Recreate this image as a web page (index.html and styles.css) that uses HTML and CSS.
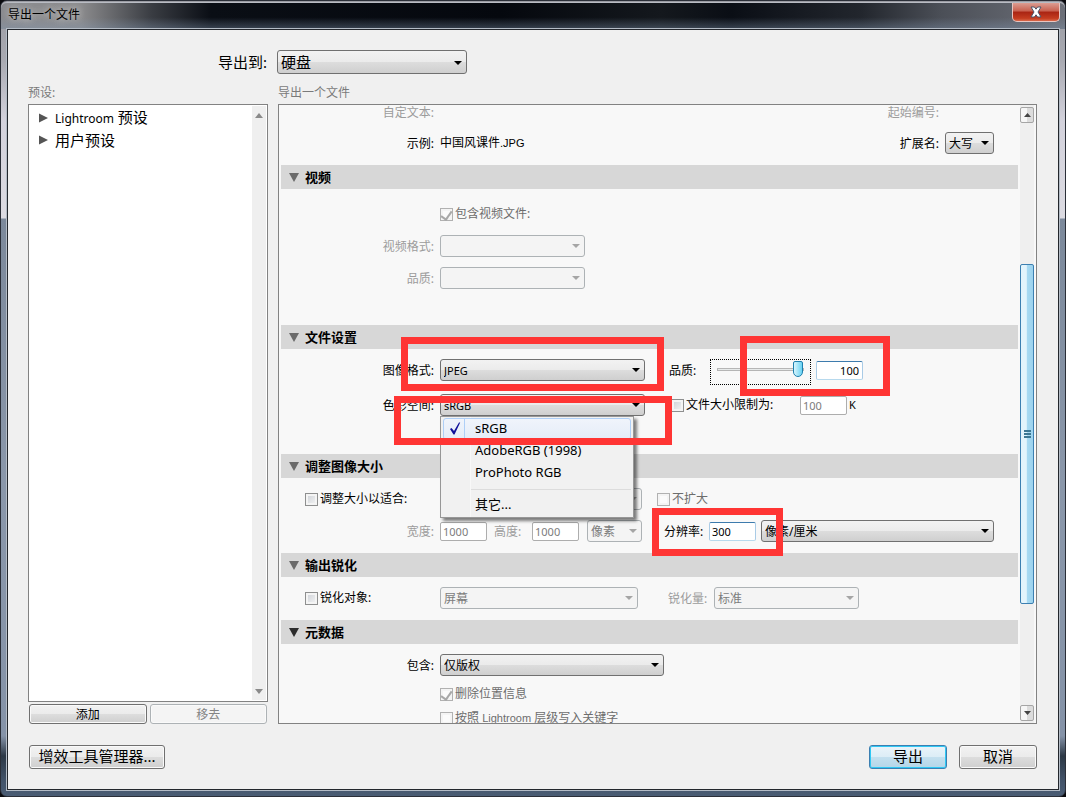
FILE: index.html
```html
<!DOCTYPE html>
<html lang="zh-CN">
<head>
  <meta charset="UTF-8" />
  <meta name="viewport" content="width=device-width, initial-scale=1.0"/>
  <title>导出一个文件</title>
  <link rel="stylesheet" href="styles.css">
</head>
<body>

<div class="window">
  <header class="titlebar">
    <h1>导出一个文件</h1>
    <button type="button" class="close" aria-label="关闭">
      <svg width="14" height="12" viewBox="0 0 14 12">
        <path d="M2 1h3.4L7 3.2 8.6 1H12L9 6l3 5H8.6L7 8.8 5.4 11H2l3-5z" fill="#fff" stroke="#4d5468" stroke-width="1"/>
      </svg>
    </button>
  </header>

  <form class="client">
    <div class="target">
      <label for="target">导出到:</label>
      <span class="select large w-target"><select id="target"><option>硬盘</option></select></span>
    </div>

    <div class="columns">
      <section class="presets">
        <h2 class="caption">预设:</h2>
        <div class="list">
          <ul>
            <li><svg width="9" height="10" viewBox="0 0 9 10"><path d="M0 0.5L9 5 0 9.5z" fill="#555"/></svg><span><span class="latin">Lightroom</span> 预设</span></li>
            <li><svg width="9" height="10" viewBox="0 0 9 10"><path d="M0 0.5L9 5 0 9.5z" fill="#555"/></svg>用户预设</li>
          </ul>
          <div class="scrollbar thin">
            <svg width="8" height="5" viewBox="0 0 8 5"><path d="M4 0l4 5H0z" fill="#8a8a8a"/></svg>
            <svg width="8" height="5" viewBox="0 0 8 5"><path d="M0 0h8L4 5z" fill="#8a8a8a"/></svg>
          </div>
        </div>
        <div class="preset-buttons">
          <button type="button">添加</button>
          <button type="button" disabled>移去</button>
        </div>
      </section>

      <section class="settings">
        <h2 class="caption">导出一个文件</h2>
        <div class="panel">
          <div class="content">
            <div class="group naming">
              <div class="row cut muted">
                <span class="name">自定文本:</span>
                <span class="right start-no">起始编号:</span>
              </div>
              <div class="row">
                <span class="name">示例:</span>
                <span>中国风课件<span class="small">.JPG</span></span>
                <label class="right" for="ext">扩展名:</label>
                <span class="select w-ext"><select id="ext"><option>大写</option></select></span>
              </div>
            </div>

            <h3><i class="fold"></i>视频</h3>
            <div class="group video">
              <div class="row">
                <span class="name"></span>
                <label class="check"><input type="checkbox" checked disabled>包含视频文件:</label>
              </div>
              <div class="row">
                <label class="name muted" for="vformat">视频格式:</label>
                <span class="select off w-video"><select id="vformat" disabled></select></span>
              </div>
              <div class="row">
                <label class="name muted" for="vquality">品质:</label>
                <span class="select off w-video"><select id="vquality" disabled></select></span>
              </div>
            </div>

            <h3><i class="fold"></i>文件设置</h3>
            <div class="group file">
              <div class="row">
                <label class="name" for="format">图像格式:</label>
                <span class="select latin-value w-format"><select id="format"><option>JPEG</option></select></span>
                <label class="quality-name" for="quality">品质:</label>
                <span class="slider"><input type="range" id="quality" min="0" max="100" value="100"></span>
                <input type="text" class="active number" value="100" aria-label="品质">
              </div>
              <div class="row">
                <label class="name" for="space">色彩空间:</label>
                <span class="select latin-value w-format">
                  <select id="space"><option>sRGB</option></select>
                  <span class="menu">
                    <button type="button" class="selected"><svg width="12" height="13" viewBox="0 0 12 13"><path d="M1 7l1.5-1L5 9 10 0.500h1.200L5.500 12.500H4.500z" fill="#10109a"/></svg>sRGB</button>
                    <button type="button">AdobeRGB (1998)</button>
                    <button type="button">ProPhoto RGB</button>
                    <span class="line"></span>
                    <button type="button">其它...</button>
                  </span>
                </span>
                <label class="check limit"><input type="checkbox">文件大小限制为:</label>
                <input type="text" value="100" disabled aria-label="文件大小">
                <span class="unit">K</span>
              </div>
            </div>

            <h3><i class="fold"></i>调整图像大小</h3>
            <div class="group resize">
              <div class="row">
                <label class="check wide"><input type="checkbox">调整大小以适合:</label>
                <span class="select off w-fit"><select disabled aria-label="适合"></select></span>
                <label class="check enlarge"><input type="checkbox" disabled>不扩大</label>
              </div>
              <div class="row">
                <label class="name muted" for="width">宽度:</label>
                <input type="text" id="width" value="1000" disabled>
                <label class="height-name muted" for="height">高度:</label>
                <input type="text" id="height" value="1000" disabled>
                <span class="select off w-unit"><select disabled aria-label="单位"><option>像素</option></select></span>
                <label class="ppi-name" for="ppi">分辨率:</label>
                <input type="text" id="ppi" class="active" value="300">
                <span class="select grow"><select aria-label="分辨率单位"><option>像素/厘米</option></select></span>
              </div>
            </div>

            <h3><i class="fold"></i>输出锐化</h3>
            <div class="group sharpen">
              <div class="row">
                <label class="check wide"><input type="checkbox">锐化对象:</label>
                <span class="select off w-sharpen"><select disabled aria-label="锐化对象"><option>屏幕</option></select></span>
                <label class="amount-name muted" for="amount">锐化量:</label>
                <span class="select off w-video"><select id="amount" disabled><option>标准</option></select></span>
              </div>
            </div>

            <h3><i class="fold dark"></i>元数据</h3>
            <div class="group meta">
              <div class="row">
                <label class="name" for="include">包含:</label>
                <span class="select w-include"><select id="include"><option>仅版权</option></select></span>
              </div>
              <div class="row">
                <span class="name"></span>
                <label class="check"><input type="checkbox" checked disabled>删除位置信息</label>
              </div>
              <div class="row last">
                <span class="name"></span>
                <label class="check"><input type="checkbox" disabled><span>按照 <span class="small">Lightroom</span> 层级写入关键字</span></label>
              </div>
            </div>

            <!-- highlighted options -->
            <div class="mark mark-format"></div>
            <div class="mark mark-space"></div>
            <div class="mark mark-quality"></div>
            <div class="mark mark-ppi"></div>
          </div>

          <div class="scrollbar">
            <button type="button" aria-label="向上"><svg width="7" height="4" viewBox="0 0 7 4"><path d="M3.500 0L7 4H0z" fill="#444"/></svg></button>
            <div class="track"><div class="thumb"><i></i><i></i><i></i></div></div>
            <button type="button" aria-label="向下"><svg width="7" height="4" viewBox="0 0 7 4"><path d="M0 0h7L3.500 4z" fill="#444"/></svg></button>
          </div>
        </div>
      </section>
    </div>

    <footer>
      <button type="button" class="plugins">增效工具管理器...</button>
      <button type="submit" class="primary">导出</button>
      <button type="button">取消</button>
    </footer>
  </form>
</div>

</body>
</html>
```
FILE: styles.css
```css
* {
  box-sizing: border-box;
}
body {
  margin: 0;
  background: #0a0a0e;
  font-family: "Noto Sans", "Noto Sans CJK SC", sans-serif;
  font-size: 12px;
  line-height: 18px;
  color: #000;
}
h1, h2, h3, ul {
  margin: 0;
  padding: 0;
  font-weight: normal;
  font-size: 12px;
}
button, input, select {
  font-family: inherit;
  font-size: 12px;
  color: #000;
  margin: 0;
}

/* window frame */
.window {
  display: flex;
  flex-direction: column;
  height: 100vh;
  min-height: 797px;
  padding: 2px 6px 6px;
  border: 1px solid #2b2f38;
  border-radius: 7px;
  background: linear-gradient(#9a9ba2 0, #a9aab2 60px, #d3d2dc 120px, #dcdbe2 217px, #7c899b 218px, #8a97aa 480px, #8593a8 735px, #2c3846 755px, #43546a 780px, #4a5c74 100%);
}
.titlebar {
  display: flex;
  justify-content: space-between;
  align-items: flex-start;
  height: 26px;
  margin: 0 -6px;
  padding: 0 5px 0 7px;
  border-top: 1px solid #b9bcc4;
  border-radius: 6px 6px 0 0;
  margin-top: -1px;
  flex: 0 0 27px;
  background: linear-gradient(rgba(255,255,255,0) 55%, rgba(130,150,175,0.4)), linear-gradient(90deg, #8a8b8f 0, #8b8b8d 80px, #3a3d43 150px, #0a0e15 210px, #05080e 500px, #14181d 660px, #0a0e15 730px, #22262d 860px, #4b4f57 940px, #6d7079 100%);
}
.titlebar h1 {
  line-height: 24px;
  text-shadow: 0 0 6px #ccc, 0 0 8px #bbb;
}
.close {
  display: flex;
  justify-content: center;
  align-items: center;
  width: 48px;
  height: 19px;
  padding: 0;
  border: 1px solid #e9c5c0;
  border-top: 0;
  border-radius: 0 0 5px 5px;
  background: linear-gradient(#dc9d92, #c8604f 45%, #a92413 50%, #c43c20 85%, #d9694a);
}
.client {
  display: flex;
  flex-direction: column;
  flex: 1;
  min-height: 0;
  padding: 20px 21px 20px 20px;
  border: 1px solid #23272d;
  background: #f0f0f0;
  box-shadow: 0 0 0 1px #b4bcc6;
}

/* top row */
.target {
  display: flex;
  align-items: center;
  gap: 10px;
  padding-left: 190px;
  font-size: 15px;
}
.columns {
  display: flex;
  flex: 1;
  gap: 10px;
  min-height: 0;
  margin: 10px 0 21px;
}
.caption {
  line-height: 18px;
  margin-bottom: 2px;
  color: #7a7a7a;
}

/* preset list */
.presets {
  display: flex;
  flex-direction: column;
  width: 240px;
}
.list {
  display: flex;
  flex: 1;
  justify-content: space-between;
  padding: 1px;
  border: 1px solid #828282;
  background: #fff;
}
.list ul {
  padding: 1px 9px;
  list-style: none;
}
.list li {
  display: flex;
  align-items: center;
  gap: 7px;
  height: 22px;
  font-size: 15px;
}
.latin {
  font-size: 12px;
}
.small {
  font-family: "Liberation Sans", sans-serif;
  font-size: 11px;
}
.preset-buttons {
  display: grid;
  grid-template-columns: 1fr 1fr;
  gap: 3px;
  padding: 2px 1px 0;
}

/* buttons */
.preset-buttons button, footer button {
  height: 20px;
  padding: 0;
  border: 1px solid #707070;
  border-radius: 3px;
  background: linear-gradient(#f2f2f2, #ebebeb 50%, #dddddd 50%, #cfcfcf);
  box-shadow: inset 0 0 0 1px #fafafa;
}
.preset-buttons button:disabled {
  border-color: #adb2b5;
  background: #f4f4f4;
  color: #838383;
}
footer {
  display: flex;
  gap: 12px;
  padding-left: 1px;
}
footer button {
  width: 78px;
  height: 24px;
  padding-bottom: 2px;
  font-size: 15px;
  line-height: 20px;
}
footer .plugins {
  width: 136px;
  margin-right: auto;
}
footer .primary {
  border-color: #3c7fb1;
  background: linear-gradient(#eaf4fa, #dcedf6 50%, #c4e0ef 50%, #b4d6e8);
  box-shadow: inset 0 0 0 1px #2fc8f4;
}

/* settings panel */
.settings {
  display: flex;
  flex-direction: column;
  flex: 1;
  min-width: 0;
}
.panel {
  display: flex;
  flex: 1;
  gap: 2px;
  min-height: 0;
  padding: 0 2px;
  border: 1px solid #828282;
  background: #f8f8f8;
  overflow: hidden;
}
.content {
  position: relative;
  flex: 1;
  min-width: 0;
}
h3 {
  display: flex;
  align-items: center;
  gap: 6px;
  height: 24px;
  padding-left: 8px;
  background: #d7d7d7;
  font-size: 13px;
  font-weight: bold;
}
.fold {
  border: 5px solid transparent;
  border-top: 9px solid #6a6a6a;
  border-bottom: 0;
}
.fold.dark {
  border-top-color: #2c2c2c;
}
.group {
  display: flex;
  flex-direction: column;
  padding: 10px 24px 11px 0;
}
.row {
  display: flex;
  align-items: center;
  height: 22px;
}
.row > label:not(.check), .name {
  padding-top: 2px;
}
.name {
  width: 153px;
  margin-right: 6px;
  text-align: right;
}
.muted {
  color: #9c9c9c;
}
.right {
  margin-left: auto;
  margin-right: 6px;
}
.naming {
  gap: 13px;
  padding-top: 0;
}
.row.cut {
  height: 14px;
}
.start-no {
  padding-top: 2px;
  margin-right: 55px;
}
.video {
  gap: 10px;
  padding-top: 14px;
  padding-bottom: 36px;
}
.file {
  gap: 13px;
  padding-bottom: 38px;
}
.resize {
  gap: 10px;
}
.meta {
  gap: 7px;
  padding-bottom: 0;
}
.meta .last {
  margin-top: -5px;
}

/* drop-downs */
.select {
  position: relative;
  display: block;
  height: 22px;
}
.select select {
  display: block;
  width: 100%;
  height: 100%;
  padding: 0 16px 0 3px;
  border: 1px solid #707070;
  border-radius: 3px;
  background: linear-gradient(#f2f2f2, #ebebeb 50%, #dddddd 50%, #cfcfcf);
  appearance: none;
  opacity: 1;
}
.select::after {
  content: "";
  position: absolute;
  right: 5px;
  top: 9px;
  border: 4px solid transparent;
  border-top-color: #000;
  border-bottom: 0;
}
.select.off select {
  border-color: #adb2b5;
  background: #f4f4f4;
  color: #7c7c7c;
}
.select.off::after {
  border-top-color: #a5a5a5;
}
.select.large {
  height: 24px;
}
.select.large select {
  font-size: 15px;
}
.select.large::after {
  top: 11px;
}
.select.latin-value select {
  font-size: 11px;
}
.w-target { width: 190px; }
.w-ext { width: 49px; }
.w-video { width: 145px; }
.w-format { width: 205px; }
.w-fit { width: 202px; }
.w-unit { width: 55px; margin-left: 8px; }
.w-sharpen { width: 198px; }
.w-include { width: 224px; }
.grow { flex: 1; margin-left: 5px; }

/* text boxes */
input[type="text"] {
  width: 47px;
  height: 19px;
  padding: 0 2px;
  border: 1px solid #adadad;
  border-radius: 2px;
  background: #fff;
  font-size: 11px;
}
input[type="text"]:disabled {
  color: #7c7c7c;
}
input[type="text"].active {
  border-color: #3d7bad #a9cbe6 #b7d9ed #a9cbe6;
}
input[type="text"].number {
  margin-left: 5px;
  padding-right: 3px;
  text-align: right;
}

/* tick boxes */
.check {
  display: flex;
  align-items: center;
  gap: 2px;
}
.check input {
  display: grid;
  place-items: center;
  width: 13px;
  height: 13px;
  border: 1px solid #8e8f8f;
  background: linear-gradient(135deg, #cbcfd5, #f6f6f6);
  box-shadow: inset 0 0 0 2px #f4f4f4;
  appearance: none;
}
.check input:disabled {
  border-color: #b1b1b1;
  background: #fbfbfb;
}
.check:has(:disabled) {
  color: #6d6d6d;
}
.check input:checked::before {
  content: "";
  width: 5px;
  height: 9px;
  margin-bottom: 2px;
  border: solid #a8a8a8;
  border-width: 0 2px 2px 0;
  transform: rotate(35deg);
}
.check.wide {
  width: 135px;
  margin-left: 24px;
}
.check.limit {
  width: 129px;
  margin-left: 26px;
}
.enlarge {
  margin-left: 15px;
}
.unit {
  margin-left: 2px;
  font-size: 11px;
}
.quality-name {
  width: 41px;
  margin-left: 24px;
}
.height-name {
  width: 38px;
  margin-left: 7px;
}
.ppi-name {
  width: 45px;
  margin-left: 22px;
}
.amount-name {
  width: 46px;
  margin-left: 30px;
}

/* quality slider */
.slider {
  width: 101px;
  height: 26px;
  padding: 0 6px;
  margin-top: 3px;
  border: 1px dotted #000;
}
.slider input {
  display: block;
  width: 100%;
  height: 20px;
  background: none;
  appearance: none;
}
.slider input::-webkit-slider-runnable-track {
  height: 3px;
  border: 1px solid #b5b5b5;
  background: #e7eaea;
}
.slider input::-webkit-slider-thumb {
  width: 10px;
  height: 16px;
  margin-top: -8px;
  border: 1px solid #1c7fae;
  border-radius: 2px 2px 5px 5px;
  background: linear-gradient(90deg, #d8f5fd, #6bd3f3);
  appearance: none;
}

/* open colour space menu */
.menu {
  position: absolute;
  z-index: 1;
  top: 100%;
  left: 0;
  width: 194px;
  padding: 1px 2px 2px;
  border: 1px solid #979797;
  background: linear-gradient(90deg, #f1f1f1 28px, #e2e3e3 28px, #fff 29px, #f1f1f1 30px);
  box-shadow: 3px 3px 3px rgba(0,0,0,0.5);
}
.menu button {
  display: flex;
  align-items: center;
  gap: 14px;
  width: 100%;
  height: 22px;
  padding: 0 0 2px 31px;
  border: 1px solid transparent;
  background: none;
  font-size: 13px;
}
.menu .selected {
  padding-left: 5px;
  border-color: #aecff7;
  border-radius: 3px;
  background: linear-gradient(90deg, transparent 20px, #aecff7 20px, #aecff7 21px, transparent 21px), linear-gradient(#f0f4fb, #e4ecf8);
}
.menu .line {
  display: block;
  height: 1px;
  margin: 5px 0 3px 28px;
  background: #dcdcdc;
}

/* scrollbars */
.scrollbar {
  display: flex;
  flex-direction: column;
  justify-content: space-between;
  width: 14px;
  padding: 2px 0;
  background: #efefef;
}
.scrollbar button {
  display: flex;
  justify-content: center;
  align-items: center;
  height: 16px;
  padding: 0;
  border: 1px solid #a5a5a5;
  border-radius: 2px;
  background: linear-gradient(90deg, #f6f6f6 50%, #dcdcdc 50%);
}
.scrollbar.thin {
  align-items: center;
  padding: 7px 0 6px;
}
.track {
  flex: 1;
  padding-top: 141px;
}
.thumb {
  display: flex;
  flex-direction: column;
  justify-content: center;
  align-items: center;
  gap: 1px;
  height: 77%;
  border: 1px solid #3c7fb1;
  border-radius: 2px;
  background: linear-gradient(90deg, #e3f4fc 45%, #a9daf2 50%, #9bd2ee);
}
.thumb i {
  width: 7px;
  height: 2px;
  background: #3c7894;
}

/* red frames over the options to change */
.mark {
  position: absolute;
  z-index: 2;
  border: 7px solid #ff3534;
  pointer-events: none;
}
.mark-format {
  left: 120px;
  top: 232px;
  width: 263px;
  height: 54px;
}
.mark-space {
  left: 113px;
  top: 291px;
  width: 278px;
  height: 49px;
}
.mark-quality {
  left: 459px;
  top: 231px;
  width: 150px;
  height: 60px;
}
.mark-ppi {
  left: 371px;
  top: 403px;
  width: 131px;
  height: 48px;
}
```
